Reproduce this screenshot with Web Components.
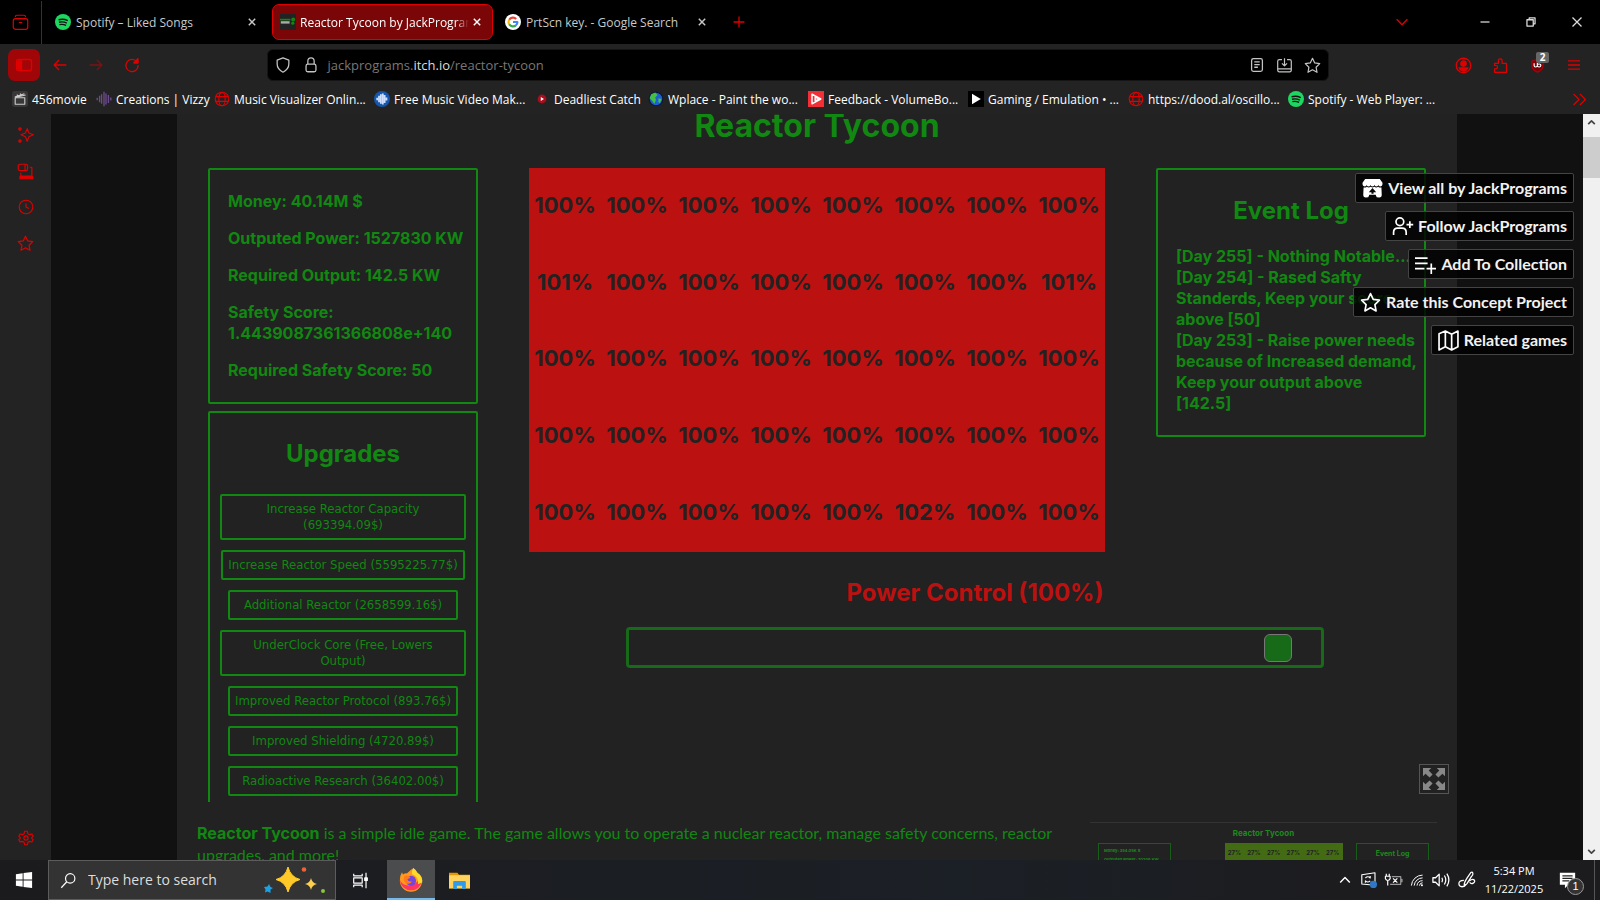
<!DOCTYPE html>
<html lang="en">
<head>
<meta charset="utf-8">
<title>Reactor Tycoon by JackPrograms</title>
<style>
  html, body { height: 100%; margin: 0; }
  body {
    background: #232323;
    font-family: "Open Sans", "Noto Sans", sans-serif;
    font-size: 12px;
    overflow: hidden;
  }
</style>
</head>
<body>
<desktop-screen></desktop-screen>

<script>
const ICONS = {
  archive: '<path d="M4 3.500q0-2 2-2h8q2 0 2 2"/><rect x="1.500" y="5.500" width="17" height="12.500" rx="2.500"/><path d="M8 10h4"/>',
  close: '<path d="M6 6l8 8M14 6l-8 8"/>',
  plus: '<path d="M10 4v12M4 10h12"/>',
  chevron: '<path d="M4 7l6 6 6-6"/>',
  caret: '<path d="M4 13l6-6 6 6"/>',
  minimize: '<path d="M5 10h10"/>',
  restore: '<path d="M5.500 7.500h7v7h-7zM8 7V5.500h6.500V12H13"/>',
  winclose: '<path d="M5 5l10 10M15 5L5 15"/>',
  sidebar: '<rect x="2.500" y="4.500" width="15" height="11" rx="2"/><path d="M7.500 5v10"/><path d="M4 6h2.500v8H4z" fill="currentColor"/>',
  back: '<path d="M17 10H3.500M9 4.500L3.500 10 9 15.500"/>',
  forward: '<path d="M3 10h13.500M11 4.500l5.500 5.500-5.500 5.500"/>',
  reload: '<path d="M15.500 6.500A6.800 6.800 0 1 0 16.800 10M16.500 3v4.500H12"/><path d="M16.500 3v4.500H12z" fill="currentColor"/>',
  shield: '<path d="M10 2l6.500 2.500V9c0 4-2.500 7-6.500 9-4-2-6.500-5-6.500-9V4.500z"/>',
  lock: '<rect x="4.500" y="9" width="11" height="8.500" rx="2"/><path d="M6.500 9V5.500a3.500 3.500 0 0 1 7 0V9"/>',
  reader: '<rect x="4" y="3" width="12" height="14" rx="2"/><path d="M7 6.500h6M7 9.500h6M7 12.500h4"/>',
  download: '<path d="M7 3H4Q2 3 2 5v10Q2 17.500 4 17.500h12q2 0 2-2.500V5Q18 3 16 3h-3M2 14h16M10 1.500v8.500M7 7.500l3 3 3-3"/>',
  star: '<path d="M10 1.500l2.600 5.500 5.900.800-4.300 4.200 1.100 6-5.300-2.900-5.300 2.900 1.100-6L1.500 7.800l5.900-.800z"/>',
  account: '<circle cx="10" cy="10" r="7.600"/><circle cx="10" cy="8" r="2.800" fill="currentColor"/><path d="M5.500 12.500h9q-1.500 3-4.500 3t-4.500-3z" fill="currentColor"/>',
  puzzle: '<path d="M3 7.500h4.500V4.500a2.200 2.200 0 0 1 4.400 0v3h5.100V18H3v-4h1.500a2 2 0 0 0 0-4H3z"/>',
  ublock: '<path d="M10 1.500l7.500 2.500v6c0 4.500-3 7-7.500 9-4.500-2-7.500-4.500-7.500-9V4z" fill="#7a0006" stroke="#b3000c"/><path d="M5.500 7v3q0 2 2 2t2.300-2V7v3q.200 2 2.300 2t2.300-2-2.300-2-2.300 2" stroke="#fff" stroke-width="1.600"/>',
  menu: '<path d="M1.500 4h17M1.500 10h17M1.500 16h17"/>',
  more: '<path d="M3 3.500l6.500 6.500L3 16.500M10.500 3.500L17 10l-6.500 6.500"/>',
  sparkle: '<path d="M11.500 2l2.200 5.500 5.500 2.300-5.500 2.300-2.200 5.700-2.200-5.700-5.500-2.300 5.500-2.300z"/><circle cx="2.500" cy="2.500" r="1.500" fill="currentColor"/><circle cx="2.500" cy="17.500" r="1.500" fill="currentColor"/>',
  synced: '<rect x="1.500" y="1.500" width="11" height="7.500" rx="2"/><path d="M9.500 1.500v7.500M15 5h1.500q1 0 1 1v9.500h-13V11.500"/><path d="M3.500 16h15v2.500h-15z" fill="currentColor"/>',
  history: '<circle cx="10" cy="10" r="8.500"/><path d="M10 5.500V10l3.500 2"/>',
  gear: '<circle cx="10" cy="10" r="2.600"/><path d="M8.300 1.500h3.400l.7 3.100 2.100 1.200 2.900-.8 1.600 3-2.100 2 2.100 2-1.600 3-2.900-.8-2.100 1.200-.7 3.100H8.300l-.7-3.100-2.100-1.200-2.900.8-1.600-3 2.100-2-2.100-2 1.600-3 2.900.8 2.100-1.200z"/>',
  globe: '<circle cx="10" cy="10" r="8.500"/><ellipse cx="10" cy="10" rx="4" ry="8.500"/><path d="M2.500 7h15M2.500 13h15"/>',
  spotify: '<circle cx="10" cy="10" r="10" fill="#1ed760" stroke="none"/><path d="M4.500 7.200q6-1.700 11.500 1M5 10.300q5-1.300 9.800 1M5.500 13.300q4.500-1 8.300 1" stroke="#111" stroke-width="1.700"/>',
  google: '<circle cx="10" cy="10" r="10" fill="#fff" stroke="none"/><g stroke-width="2.700"><path d="M14 6.200A5.500 5.500 0 0 0 5.300 7.200" stroke="#ea4335"/><path d="M5.300 7.200a5.500 5.500 0 0 0 0 5.600" stroke="#fbbc05"/><path d="M5.300 12.800a5.500 5.500 0 0 0 8.300 1.400" stroke="#34a853"/><path d="M13.600 14.200A5.500 5.500 0 0 0 15.500 10H10" stroke="#4285f4"/></g>',
  tycoon: '<g stroke="none"><path d="M0 0h20v20H0z" fill="#222"/><path d="M0 6h13v2H0z" fill="#128512"/><path d="M1 9h11v3H1z" fill="#aaa"/><circle cx="16.500" cy="7" r="2.500" fill="#128512"/><circle cx="16" cy="11.500" r="2" fill="#128512"/></g>',
  movie: '<rect width="20" height="20" rx="3" fill="#383838" stroke="none"/><rect x="4" y="8.500" width="12" height="8" stroke="#ccc"/><path d="M3.500 7.500L15.500 3.500M6 4.500l2 2M10 3.200l2 2M4 8l13-3" stroke="#ccc"/>',
  vizzy: '<path d="M1.500 8.500v3M4.500 6v8M7 4v12M10 1v18M12.500 3v14M15.500 5v10M18.500 8v4" stroke="#6d4a8c" stroke-width="1.700"/>',
  musicvid: '<circle cx="10" cy="10" r="10" fill="#1557ac" stroke="none"/><path d="M4 8.500v3M6.300 6v8M8.600 4v12M11 3v14M13.300 5v10M15.600 8v4" stroke="#cfe0ff" stroke-width="2.200"/>',
  deadliest: '<circle cx="10" cy="10" r="5.500" fill="#a80f1c" stroke="none"/><path d="M8.500 7.500v5l4-2.500z" fill="#fff" stroke="none"/>',
  wplace: '<circle cx="10" cy="10" r="8.500" fill="#1c5fd8" stroke="#0a1638"/><path d="M4 4l5-2 3 3-3 3 1 3-2 5-3-4-3-3zM13 9l4 1-2 5-2-1z" fill="#45c043" stroke="none"/>',
  feedback: '<path d="M0 0h20v20H0z" fill="#f22f37" stroke="none"/><path d="M5 4v12l11-6zM9 7.500v5l4-2.500z" stroke="#fff" stroke-width="1.800"/>',
  gaming: '<path d="M0 0h20v20H0z" fill="#000" stroke="none"/><path d="M5 3.500v13L16 10z" fill="#fff" stroke="none"/>',
  itch: '<g stroke="none" fill="currentColor"><path d="M3 1h14l2.500 3.500v1.500q0 2-2 2t-2-1.500q0 1.500-1.800 1.500t-1.900-1.500q0 1.500-1.800 1.500T8.200 6.500Q8.200 8 6.300 8T4.500 6.500Q4.500 8 2.500 8t-2-2V4.500z"/><path fill-rule="evenodd" d="M1.500 9q2 .500 3-.700 2 1.500 3.800 0 1.700 1.500 3.400 0 1.800 1.500 3.800 0 1 1.200 3 .700l.3 7q0 2.500-2.300 2.500l-2.500-.200-1-2.300H7l-1 2.300-2.500.200Q1.200 18.500 1.200 16zM10 9.500l-3.500 4H9V15h2v-1.500h2.500z"/></g>',
  follow: '<circle cx="7.500" cy="5.500" r="3.700"/><path d="M1.500 18v-2.500q0-4 4-4h4q4 0 4 4V18M17 5v6.500M13.800 8.200h6.400"/>',
  collection: '<path d="M0 4h12M0 9h12M0 14h9M15.500 9v10M11 14h9"/>',
  map: '<path d="M1 3.500L7 1l6 3 6-3v15L13 19l-6-3-6 3zM7 1v15M13 4v15"/>',
  expand: '<g fill="currentColor" stroke="none"><path d="M0 0h7.500L5.200 2.300 8.700 6 6 8.700 2.300 5.200 0 7.500z"/><path d="M20 0v7.500l-2.300-2.300L14 8.700 11.300 6l3.500-3.700L12.500 0z"/><path d="M0 20v-7.500l2.300 2.300L6 11.300 8.700 14l-3.500 3.700L7.500 20z"/><path d="M20 20h-7.500l2.300-2.300L11.300 14l2.700-2.700 3.700 3.500 2.300-2.300z"/></g>',
  windows: '<path d="M1 3.500l7.500-1v7H1zM9.500 2.300L19 1v8.500H9.500zM1 10.500h7.500v7L1 16.500zM9.500 10.500H19V19l-9.500-1.300z" fill="#fff" stroke="none"/>',
  search: '<circle cx="12" cy="7.500" r="5.500"/><path d="M8 11.500L1.500 18.500"/>',
  taskview: '<path d="M2 2v2.500h10V2M2 18v-2.500h10V18M2 7h10v6H2zM16.500 1v18"/><path d="M15 7h3v3h-3z" fill="#fff"/>',
  firefox: '<g stroke="none"><path d="M10 1.500q2-1 1.800-1.500 3 2 3.500 4 4 2 4 6.500A9.300 9.300 0 0 1 .700 10.500Q.700 6 2.500 3.500l.8 2Q5 4.300 6.500 4.500z" fill="#ff9a1f"/><path d="M.700 10q2 4.500 7 4.500t9.500-5l2 1A9.300 9.300 0 0 1 .700 10z" fill="#ff3565"/><path d="M11.800 0q3 2 3.500 4 4.500 3 4 8l-3.500 1.500q1-6-5-8.500 0-3 1-5z" fill="#ffd82e"/><circle cx="10" cy="10.700" r="4.200" fill="#7547d8"/><path d="M4.500 6.500q4-1 5 1.500l-2.500 1.300q.500 2.500 4 1.700-2 3.500-5.500 1.500-2.500-2-1-6z" fill="#ff7a1d"/></g>',
  folder: '<g stroke="none"><path d="M0 2.500h8l1.500 2H20v13H0z" fill="#e29a00"/><path d="M0 5h20v12.500H0z" fill="#ffd35e"/><path d="M4 11.500q0-1 1-1h10q1 0 1 1v6.500h-3.500v-3h-5v3H4z" fill="#2f9bea"/></g>',
  update: '<path d="M1 3.500L17.500 1v15.500L1 15z"/><path d="M5.500 7.500q3-3 6 0V5M11.500 11q-3 3-6 0v2.500"/><circle cx="15.500" cy="15.500" r="4.500" fill="#2f78c8" stroke="none"/>',
  battery: '<path d="M8 5.500h10.500v9H6M19 8.500h1v3h-1" stroke="#999"/><path d="M1.500 2v3M5 2v3M.500 5h5.500v3q-1 2-2.700 2T.500 8zM3.200 10v6M9.500 7.500l5 5M14.500 7.500l-5 5"/>',
  wifi: '<path d="M2 18A16 16 0 0 1 18 3M6 18A12 12 0 0 1 18 7M10 18a8 8 0 0 1 8-7M13.500 18a4.500 4.500 0 0 1 4.500-4"/><circle cx="17" cy="17.500" r="1.500" fill="#fff" stroke="none"/>',
  speaker: '<path d="M1 7.500h3l4-4v13l-4-4H1zM11 7.500q1.500 2.500 0 5M13.800 5q3 5 0 10M16.500 3q4.500 7 0 14"/>',
  pen: '<path d="M7 14q1-3 3-6l4-6q2-1.500 2.500.500T15 6l-5 8-3 3zM6.500 10.500q-5.500 0-5.500 3.500t3.500 3.500q2.500 0 4-3M12.500 11q4-3 5.500-1t-1 3.500-4-1"/>',
  notice: '<path d="M1 1h18v14h-8l-4 4v-4H1z" fill="#fff" stroke="none"/><path d="M4 4.500h12M4 7.500h12M4 10.500h8" stroke="#222"/>'
};

// Shared base: puts the class markup into an open shadow root
class BaseElement extends HTMLElement {
  connectedCallback() {
    if (this.shadowRoot) return;
    this.attachShadow({ mode: "open" });
    this.shadowRoot.innerHTML = this.render();
  }
}

const icon = (name, size = 16, extra = "") =>
  `<ui-icon name="${name}" size="${size}" ${extra}></ui-icon>`;

class UiIcon extends BaseElement {
  render() {
    const size = this.getAttribute("size") || 16;
    const stroke = this.getAttribute("stroke") || 1.4;
    return `
      <style>
        :host { display: inline-flex; flex: none; }
        svg { display: block; overflow: visible; }
      </style>
      <svg width="${size}" height="${size}" viewBox="0 0 20 20" fill="none" stroke="currentColor"
        stroke-width="${stroke}" stroke-linejoin="round" aria-hidden="true">${ICONS[this.getAttribute("name")]}</svg>`;
  }
}

class BrowserTab extends BaseElement {
  render() {
    return `
      <style>
        :host {
          box-sizing: border-box;
          display: flex;
          align-items: center;
          gap: 5px;
          width: 225px;
          height: 36px;
          padding: 0 10px;
          color: #c9c9c9;
        }
        :host([active]) {
          gap: 4px;
          width: 221px;
          padding: 0 7px;
          border: 1px solid #e00000;
          border-radius: 7px;
          background: #7a0608;
          color: #fff;
        }
        .title { flex: 1; overflow: hidden; white-space: nowrap; }
        :host([active]) .title {
          -webkit-mask-image: linear-gradient(90deg, #000 92%, transparent);
          mask-image: linear-gradient(90deg, #000 92%, transparent);
        }
        button { display: flex; margin-left: -4px; padding: 0; border: 0; background: none; color: inherit; }
      </style>
      ${icon(this.getAttribute("icon"))}
      <span class="title"><slot></slot></span>
      <button aria-label="Close tab">${icon("close", 16, 'stroke="1.8"')}</button>`;
  }
}

class TabStrip extends BaseElement {
  render() {
    return `
      <style>
        :host { display: flex; align-items: center; height: 44px; background: #000; color: #e00000; }
        button { display: flex; justify-content: center; padding: 0; border: 0; background: none; color: inherit; }
        .view { width: 42px; padding: 13px 0; border-right: 1px solid #333; }
        .tabs { display: flex; align-items: center; gap: 2px; padding-left: 3px; }
        .new { width: 38px; }
        .list { width: 60px; margin: 0 30px 0 auto; }
        .win { width: 46px; color: #ddd; }
      </style>
      <button class="view" aria-label="Firefox View">${icon("archive", 17)}</button>
      <div class="tabs">
        <browser-tab icon="spotify">Spotify – Liked Songs</browser-tab>
        <browser-tab icon="tycoon" active>Reactor Tycoon by JackPrograms</browser-tab>
        <browser-tab icon="google">PrtScn key. - Google Search</browser-tab>
      </div>
      <button class="new" aria-label="New tab">${icon("plus", 18)}</button>
      <button class="list" aria-label="List all tabs">${icon("chevron", 18)}</button>
      <button class="win" aria-label="Minimize">${icon("minimize", 18)}</button>
      <button class="win" aria-label="Restore">${icon("restore", 18)}</button>
      <button class="win" aria-label="Close">${icon("winclose", 18)}</button>`;
  }
}

class BrowserToolbar extends BaseElement {
  render() {
    return `
      <style>
        :host {
          box-sizing: border-box;
          display: flex;
          align-items: center;
          height: 42px;
          padding: 0 8px;
          color: #e00000;
        }
        button { display: flex; align-items: center; justify-content: center; width: 36px; height: 32px; padding: 0; border: 0; background: none; color: inherit; }
        .side { width: 32px; margin-right: 2px; border-radius: 7px; background: #a00508; }
        .off { opacity: .45; }
        .url {
          box-sizing: border-box;
          display: flex;
          align-items: center;
          flex: 1;
          max-width: 1062px;
          height: 32px;
          margin: 0 auto;
          padding: 0 1px;
          border: 1px solid #151515;
          border-radius: 6px;
          background: #000;
          color: #c4c4c4;
        }
        .url button { width: 28px; }
        .address { flex: 1; padding-left: 3px; color: #777; font-size: 13px; line-height: 20px; text-decoration: none; }
        .address b { color: #ddd; font-weight: 400; }
        .badged { position: relative; }
        .badge {
          position: absolute;
          top: 3px;
          right: 6px;
          width: 13px;
          border-radius: 2px;
          background: #666;
          color: #fff;
          font: 700 10px/11px "Open Sans", sans-serif;
        }
        .tools { display: flex; gap: 1px; }
      </style>
      <button class="side" aria-label="Sidebar">${icon("sidebar", 20)}</button>
      <button aria-label="Back">${icon("back", 18)}</button>
      <button class="off" aria-label="Forward">${icon("forward", 18)}</button>
      <button aria-label="Reload">${icon("reload", 18)}</button>
      <div class="url">
        <button aria-label="Protections">${icon("shield", 18)}</button>
        <button aria-label="Site information">${icon("lock", 18)}</button>
        <a class="address" href="#">jackprograms.<b>itch.io</b>/reactor-tycoon</a>
        <button aria-label="Reader view">${icon("reader", 18)}</button>
        <button aria-label="Save page">${icon("download", 17)}</button>
        <button aria-label="Bookmark this page">${icon("star", 17)}</button>
      </div>
      <div class="tools">
        <button aria-label="Account">${icon("account", 19)}</button>
        <button aria-label="Extensions">${icon("puzzle", 17)}</button>
        <button class="badged" aria-label="uBlock Origin">${icon("ublock", 15)}<span class="badge">2</span></button>
        <button aria-label="Menu">${icon("menu", 14, 'stroke="1.8"')}</button>
      </div>`;
  }
}

class BookmarksBar extends BaseElement {
  render() {
    const items = [
      ["movie", "456movie", 84], ["vizzy", "Creations | Vizzy", 118],
      ["globe", "Music Visualizer Onlin...", 160], ["musicvid", "Free Music Video Mak...", 160],
      ["deadliest", "Deadliest Catch", 114], ["wplace", "Wplace - Paint the wo...", 160],
      ["feedback", "Feedback - VolumeBo...", 160], ["gaming", "Gaming / Emulation • ...", 160],
      ["globe", "https://dood.al/oscillo...", 160], ["spotify", "Spotify - Web Player: ...", 160]
    ];
    return `
      <style>
        :host { box-sizing: border-box; display: flex; align-items: center; height: 28px; padding: 0 12px 2px; }
        a { display: flex; align-items: center; gap: 4px; color: #fff; text-decoration: none; white-space: nowrap; }
        ui-icon { color: #e00000; }
        button { display: flex; margin-left: auto; padding: 0; border: 0; background: none; }
      </style>
      ${items.map(([ic, label, w]) => `<a href="#" style="width:${w}px">${icon(ic)}<span>${label}</span></a>`).join("")}
      <button aria-label="More bookmarks">${icon("more", 17)}</button>`;
  }
}

class SideRail extends BaseElement {
  render() {
    return `
      <style>
        :host {
          box-sizing: border-box;
          display: flex;
          flex-direction: column;
          flex: none;
          width: 51px;
          padding: 3px 0 4px;
          color: #e00000;
        }
        button { display: flex; align-items: center; justify-content: center; height: 36px; padding: 0; border: 0; background: none; color: inherit; }
        .last { margin-top: auto; }
      </style>
      <button aria-label="AI chatbot">${icon("sparkle", 16)}</button>
      <button aria-label="Synced tabs">${icon("synced", 17)}</button>
      <button aria-label="History">${icon("history", 16)}</button>
      <button aria-label="Bookmarks">${icon("star", 17)}</button>
      <button class="last" aria-label="Customize sidebar">${icon("gear", 16)}</button>`;
  }
}

class GamePanel extends BaseElement {
  render() {
    const heading = this.getAttribute("heading");
    return `
      <style>
        :host {
          box-sizing: border-box;
          display: block;
          width: 270px;
          padding: 5px 0;
          border: 2px solid #118811;
          border-radius: 2px;
          color: #118811;
        }
        h2 { margin: 20px 0 19px; font-size: 24px; line-height: 32px; text-align: center; }
      </style>
      ${heading ? `<h2>${heading}</h2>` : ""}
      <slot></slot>`;
  }
}

class UpgradeList extends BaseElement {
  render() {
    const upgrades = [
      "Increase Reactor Capacity<br>(693394.09$)", "Increase Reactor Speed (5595225.77$)",
      "Additional Reactor (2658599.16$)", "UnderClock Core (Free, Lowers<br>Output)",
      "Improved Reactor Protocol (893.76$)", "Improved Shielding (4720.89$)",
      "Radioactive Research (36402.00$)"
    ];
    return `
      <style>
        :host { display: flex; flex-direction: column; align-items: center; gap: 10px; padding: 5px 10px 60px; }
        button {
          box-sizing: border-box;
          min-width: 230px;
          max-width: 246px;
          padding: 5px;
          border: 2px solid #118811;
          border-radius: 2px;
          background: #222;
          color: #118811;
          font: 13px/16px "DejaVu Sans Condensed", "DejaVu Sans", sans-serif;
        }
        .wide { width: 246px; }
      </style>
      ${upgrades.map(u => `<button${u.includes("<br>") ? ' class="wide"' : ""}>${u}</button>`).join("")}`;
  }
}

class ReactorGrid extends BaseElement {
  render() {
    const heat = Array.from({ length: 5 }, () => Array(8).fill(100));
    heat[1][0] = 101;
    heat[1][7] = 101;
    heat[4][5] = 102;
    return `
      <style>
        :host { display: block; flex: none; width: 576px; }
        table { width: 100%; height: 384px; border-spacing: 0; table-layout: fixed; background: #bb1111; }
        td { padding: 0 0 3px; color: #222; font-size: 22px; font-weight: 700; text-align: center; }
      </style>
      <table aria-label="Reactor cores">
        ${heat.map(row => `<tr>${row.map(v => `<td>${v}%</td>`).join("")}</tr>`).join("")}
      </table>`;
  }
}

class PowerControl extends BaseElement {
  render() {
    return `
      <style>
        :host { display: flex; flex-direction: column; align-items: center; padding: 25px 5px 0 0; }
        label { margin-bottom: 18px; color: #bb1111; font-size: 24px; font-weight: 700; line-height: 32px; }
        input {
          -webkit-appearance: none;
          appearance: none;
          box-sizing: border-box;
          width: 698px;
          height: 41px;
          margin: 0;
          border: 3px solid #176a17;
          border-radius: 4px;
          background: #222;
        }
        input::-webkit-slider-thumb {
          -webkit-appearance: none;
          box-sizing: border-box;
          width: 28px;
          height: 28px;
          border: 1px solid #777;
          border-radius: 6px;
          background: #176a17;
        }
      </style>
      <label for="power">Power Control (100%)</label>
      <input id="power" type="range" min="0" max="104.6" step="any" value="100">`;
  }
}

class ItchActions extends BaseElement {
  render() {
    const actions = [
      ["itch", "View all by JackPrograms"], ["follow", "Follow JackPrograms"],
      ["collection", "Add To Collection"], ["star", "Rate this Concept Project"], ["map", "Related games"]
    ];
    return `
      <style>
        :host { display: flex; flex-direction: column; align-items: flex-end; gap: 8px; }
        a {
          box-sizing: border-box;
          display: flex;
          align-items: center;
          gap: 5px;
          height: 30px;
          padding: 0 6px;
          border: 1px solid #444;
          border-radius: 2px;
          background: rgba(0, 0, 0, .8);
          color: #f2f2f2;
          font: 700 16px/20px Lato, sans-serif;
          text-decoration: none;
          white-space: nowrap;
        }
        ui-icon { color: #fff; }
      </style>
      ${actions.map(([ic, label]) => `<a href="#">${icon(ic, 21, 'stroke="1.6"')}<span>${label}</span></a>`).join("")}`;
  }
}

// Small preview card next to the description
class GameShot extends BaseElement {
  render() {
    return `
      <style>
        :host { display: block; flex: none; width: 347px; height: 120px; border-top: 1px solid #333; color: #1d8a1d; font-size: 8px; font-weight: 700; }
        .name { padding-top: 5px; line-height: 10px; text-align: center; }
        .row { display: flex; justify-content: space-between; padding: 5px 8px 0; }
        .box { box-sizing: border-box; width: 73px; height: 80px; padding: 2px 5px; border: 1px solid #1a5c1a; font-size: 4px; line-height: 9px; white-space: nowrap; }
        .log { padding: 5px 0 0; font-size: 7px; text-align: center; }
        .cells { box-sizing: border-box; display: flex; justify-content: space-around; width: 118px; height: 80px; margin-left: 40px; padding-top: 5px; background: #426b14; color: #222; font-size: 6px; line-height: 10px; }
      </style>
      <div class="name">Reactor Tycoon</div>
      <div class="row">
        <div class="box">Money: 354.05K $<br>Outputed Power: 70206 KW</div>
        <div class="cells">${"<span>27%</span>".repeat(6)}</div>
        <div class="box log">Event Log</div>
      </div>`;
  }
}

class GamePage extends BaseElement {
  render() {
    return `
      <style>
        :host {
          position: relative;
          display: flex;
          justify-content: center;
          flex: 1;
          min-width: 0;
          overflow: hidden;
          background: #111;
          font-family: Inter, sans-serif;
          font-size: 16px;
        }
        main { width: 1280px; background: #222; color: #118811; }
        .game { position: relative; height: 688px; overflow: hidden; }
        h1 { margin: -4px 0 26px; font-size: 32px; line-height: 32px; text-align: center; }
        .board { display: flex; gap: 51px; padding: 0 31px; }
        .left { display: flex; flex-direction: column; gap: 7px; }
        .top { display: flex; align-items: flex-start; gap: 51px; }
        p { margin: 16px 8px 16px 18px; font-weight: 700; line-height: 21px; }
        .log { margin: 0 0 16px 18px; white-space: nowrap; }
        .full {
          position: absolute;
          right: 8px;
          bottom: 8px;
          display: flex;
          padding: 3px;
          border: 1px solid #555;
          background: #222;
          color: #888;
        }
        itch-actions { position: absolute; top: 59px; right: 9px; }
        .info { display: flex; justify-content: space-between; padding: 20px 20px 0; }
        .text { width: 880px; font: 16px/22px Lato, sans-serif; }
        .text b { font: 700 16px/22px Inter, sans-serif; }
      </style>
      <main>
        <section class="game">
          <h1>Reactor Tycoon</h1>
          <div class="board">
            <div class="left">
              <game-panel>
                <p>Money: 40.14M $</p>
                <p>Outputed Power: 1527830 KW</p>
                <p>Required Output: 142.5 KW</p>
                <p>Safety Score: 1.4439087361366808e+140</p>
                <p>Required Safety Score: 50</p>
              </game-panel>
              <game-panel heading="Upgrades"><upgrade-list></upgrade-list></game-panel>
            </div>
            <div class="right">
              <div class="top">
                <reactor-grid></reactor-grid>
                <game-panel heading="Event Log">
                  <p class="log">[Day 255] - Nothing Notable...<br>[Day 254] - Rased Safty<br>Standerds, Keep your score<br>above [50]<br>[Day 253] - Raise power needs<br>because of Increased demand,<br>Keep your output above<br>[142.5]</p>
                </game-panel>
              </div>
              <power-control></power-control>
            </div>
          </div>
          <button class="full" aria-label="Fullscreen">${icon("expand", 22)}</button>
        </section>
        <section class="info">
          <div class="text"><b>Reactor Tycoon</b> is a simple idle game. The game allows you to operate a nuclear reactor, manage safety concerns, reactor upgrades, and more!</div>
          <game-shot></game-shot>
        </section>
      </main>
      <itch-actions></itch-actions>`;
  }
}

class ScrollRail extends BaseElement {
  render() {
    return `
      <style>
        :host { display: flex; flex-direction: column; align-items: center; flex: none; width: 17px; background: #f0f0f0; color: #444; }
        ui-icon { padding: 3px 0; }
        .thumb { width: 100%; height: 41px; margin-top: 6px; background: #cdcdcd; }
        .down { margin-top: auto; }
      </style>
      ${icon("caret", 11, 'stroke="3"')}
      <div class="thumb"></div>
      ${icon("chevron", 11, 'stroke="3" class="down"')}`;
  }
}

class WindowsTaskbar extends BaseElement {
  render() {
    return `
      <style>
        :host { display: flex; height: 40px; background: linear-gradient(90deg, #1b1b1e, #1b2026 60%, #1c1c1f 85%); color: #fff; }
        button { display: flex; align-items: center; justify-content: center; width: 48px; padding: 0; border: 0; background: none; color: inherit; }
        .search {
          box-sizing: border-box;
          display: flex;
          align-items: center;
          gap: 11px;
          width: 288px;
          padding: 0 9px 0 11px;
          border: 1px solid #5c5c5c;
          background: #333;
        }
        input { flex: 1; min-width: 0; padding: 0; border: 0; outline: 0; background: none; font: 14px/20px "Open Sans", sans-serif; }
        input::placeholder { color: #ddd; opacity: 1; }
        .active { box-sizing: border-box; margin-left: 3px; border-bottom: 2px solid #76b9ed; padding-top: 2px; background: #4b4c4e; }
        .tray { display: flex; align-items: center; margin-left: auto; padding-right: 5px; }
        .icons { display: flex; align-items: center; gap: 8px; }
        .clock { width: 76px; font-size: 11px; line-height: 18px; text-align: center; }
        .notice { position: relative; justify-content: flex-start; width: 43px; height: 40px; padding-left: 7px; border-right: 1px solid #555; }
        .count {
          position: absolute;
          left: 15px;
          top: 18px;
          width: 15px;
          border: 1px solid #999;
          border-radius: 50%;
          background: #333;
          font-size: 11px;
          line-height: 15px;
        }
      </style>
      <button aria-label="Start">${icon("windows", 18)}</button>
      <div class="search">
        ${icon("search", 17)}
        <input type="text" aria-label="Search" placeholder="Type here to search">
        <svg width="62" height="26" viewBox="0 0 62 26" aria-hidden="true">
          <path d="M24 0q2.500 10 12 12.500Q26.500 15 24 25q-2.500-10-12-12.500Q21.500 10 24 0z" fill="#ffc928" stroke="#ffc928" stroke-linejoin="round"/>
          <path d="M47 11q1 5 6 6-5 1-6 6-1-5-6-6 5-1 6-6z" fill="#ffd04d"/>
          <path d="M5 17l1.500 3L9 21l-2.500 1.500V26l-3-1.500L1 25.500l.500-3L0 20l3.500-.500z" fill="#1ba1e8"/>
          <circle cx="40" cy="2.500" r="2.300" fill="#ed6237"/><circle cx="59" cy="24" r="2" fill="#8ac53f"/>
        </svg>
      </div>
      <button aria-label="Task view">${icon("taskview", 17)}</button>
      <button class="active" aria-label="Firefox">${icon("firefox", 24)}</button>
      <button aria-label="File Explorer">${icon("folder", 21)}</button>
      <div class="tray">
        <div class="icons">
          ${icon("caret", 16, 'stroke="1.8"')}
          ${icon("update", 16)}
          ${icon("battery", 17)}
          ${icon("wifi", 14)}
          ${icon("speaker", 18)}
          ${icon("pen", 18)}
        </div>
        <div class="clock">5:34 PM<br>11/22/2025</div>
        <button class="notice" aria-label="Notifications">${icon("notice", 17)}<span class="count">1</span></button>
      </div>`;
  }
}

class DesktopScreen extends BaseElement {
  render() {
    return `
      <style>
        :host { display: flex; flex-direction: column; height: 100vh; }
        .body { display: flex; flex: 1; min-height: 0; }
        tab-strip, browser-toolbar, bookmarks-bar, windows-taskbar { flex: none; }
      </style>
      <tab-strip></tab-strip>
      <browser-toolbar></browser-toolbar>
      <bookmarks-bar></bookmarks-bar>
      <div class="body">
        <side-rail></side-rail>
        <game-page></game-page>
        <scroll-rail></scroll-rail>
      </div>
      <windows-taskbar></windows-taskbar>`;
  }
}

customElements.define("ui-icon", UiIcon);
customElements.define("browser-tab", BrowserTab);
customElements.define("tab-strip", TabStrip);
customElements.define("browser-toolbar", BrowserToolbar);
customElements.define("bookmarks-bar", BookmarksBar);
customElements.define("side-rail", SideRail);
customElements.define("game-panel", GamePanel);
customElements.define("upgrade-list", UpgradeList);
customElements.define("reactor-grid", ReactorGrid);
customElements.define("power-control", PowerControl);
customElements.define("itch-actions", ItchActions);
customElements.define("game-shot", GameShot);
customElements.define("game-page", GamePage);
customElements.define("scroll-rail", ScrollRail);
customElements.define("windows-taskbar", WindowsTaskbar);
customElements.define("desktop-screen", DesktopScreen);
</script>
</body>
</html>
